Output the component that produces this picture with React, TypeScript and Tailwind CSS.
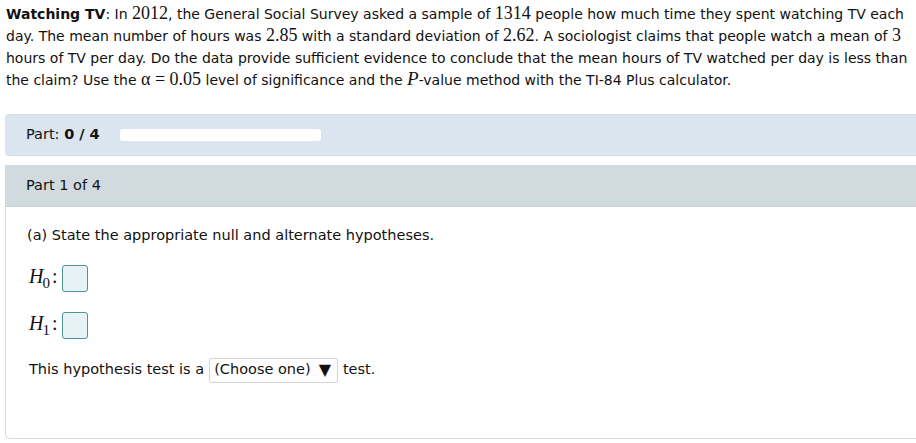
import React from "react";

const sans = { fontFamily: '"DejaVu Sans", Verdana, sans-serif' };

function Num({ children }: { children: React.ReactNode }) {
  return <span className="font-['Liberation_Serif',serif] text-[18px] leading-none">{children}</span>;
}

function AnswerBox() {
  return <span className="inline-block w-[26px] h-[27px] rounded-[3px] border border-[#4f9494] bg-[#e6f2f6]" />;
}

function Hyp({ sub }: { sub: string }) {
  return (
    <div className="flex items-center gap-[4px] h-[27px]">
      <span className="font-['Liberation_Serif',serif] text-[20px] italic leading-none flex items-start">
        <span>H</span>
        <span className="not-italic text-[15px] mt-[10px] -ml-[1px]">{sub}</span>
        <span className="not-italic ml-[2px]">:</span>
      </span>
      <AnswerBox />
    </div>
  );
}

export default function App() {
  return (
    <div className="w-[916px] h-[443px] overflow-hidden bg-white text-[#111] text-[14.5px]" style={sans}>
      <p className="pl-[6px] pt-[3px] leading-[22px] whitespace-nowrap text-[14px]">
        <b>Watching TV</b>: In <Num>2012</Num>, the General Social Survey asked a sample of <Num>1314</Num> people how
        much time they spent watching TV each
        <br />
        day. The mean number of hours was <Num>2.85</Num> with a standard deviation of <Num>2.62</Num>. A sociologist
        claims that people watch a mean of <Num>3</Num>
        <br />
        hours of TV per day. Do the data provide sufficient evidence to conclude that the mean hours of TV watched per
        day is less than
        <br />
        the claim? Use the <Num>α = 0.05</Num> level of significance and the{" "}
        <span className="font-['Liberation_Serif',serif] text-[19px] italic leading-none">P</span>-value method with the
        TI-84 Plus calculator.
      </p>

      <div className="ml-[5px] mt-[23px] h-[42px] rounded-l-[4px] bg-[#dae5ef] border-y border-[#d3dfe8] flex items-center pl-[21px]">
        <span>
          Part: <b>0 / 4</b>
        </span>
        <div className="ml-[20px] w-[201px] h-[12px] rounded-[3px] bg-white" />
      </div>

      <div className="ml-[5px] mt-[9px] rounded-bl-[5px] border-l border-b border-[#d9d9d9] h-[274px] flex flex-col">
        <div className="h-[42px] bg-[#d1dade] border-b border-[#c9d3d7] flex items-center pl-[21px] -ml-px">
          Part 1 of 4
        </div>
        <div className="pl-[21px] pt-[18px]">
          <div>(a) State the appropriate null and alternate hypotheses.</div>
          <div className="mt-[18px] pl-[2px] flex flex-col gap-[20px]">
            <Hyp sub="0" />
            <Hyp sub="1" />
          </div>
          <div className="mt-[19px] pl-[2px] flex items-center gap-[5px]">
            <span>This hypothesis test is a</span>
            <span className="inline-flex items-center h-[25px] pl-[4px] pr-[6px] border border-[#d4d4d4] rounded-[2px] bg-white">
              (Choose one) <span className="ml-[8px] text-[16px] leading-none">▼</span>
            </span>
            <span>test.</span>
          </div>
        </div>
      </div>
    </div>
  );
}
